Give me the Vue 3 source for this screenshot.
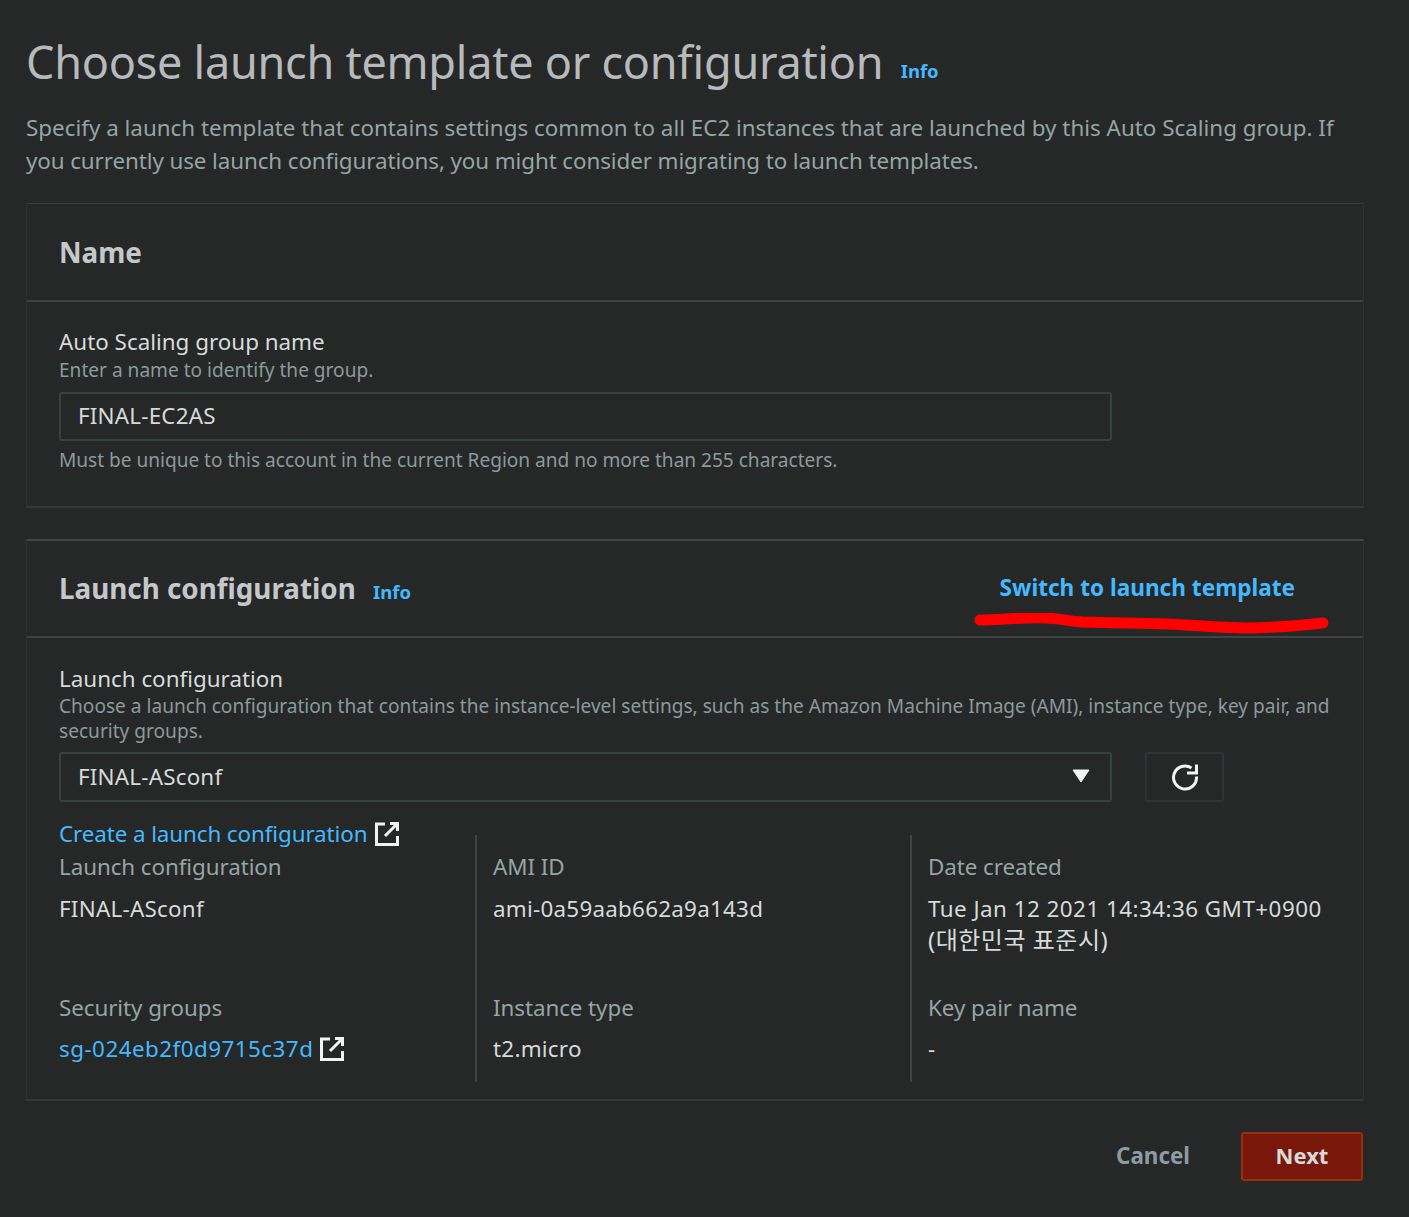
<script setup>
const details = [
  { key: 'Launch configuration', value: 'FINAL-ASconf' },
  { key: 'AMI ID', value: 'ami-0a59aab662a9a143d' },
  { key: 'Date created', value: 'Tue Jan 12 2021 14:34:36 GMT+0900', extra: '(대한민국 표준시)', wide: true },
  { key: 'Security groups', value: 'sg-024eb2f0d9715c37d', link: true, wide: true },
  { key: 'Instance type', value: 't2.micro' },
  { key: 'Key pair name', value: '-' },
]
</script>

<template>
  <main class="page">
    <header class="head">
      <h1>Choose launch template or configuration <a class="info big">Info</a></h1>
      <p>Specify a launch template that contains settings common to all EC2 instances that are launched by this Auto Scaling group. If <span class="tight">you currently use launch configurations, you might consider migrating to launch templates.</span></p>
    </header>

    <section class="card first">
      <div class="card-head"><h2>Name</h2></div>
      <div class="card-body body-one">
        <div class="label">Auto Scaling group name</div>
        <div class="desc">Enter a name to identify the group.</div>
        <div class="input">FINAL-EC2AS</div>
        <div class="desc constraint">Must be unique to this account in the current Region and no more than 255 characters.</div>
      </div>
    </section>

    <section class="card second">
      <div class="card-head split">
        <h2>Launch configuration <a class="info">Info</a></h2>
        <a class="switch">Switch to launch template</a>
        <svg class="scribble" viewBox="0 0 360 24" width="360" height="24" aria-hidden="true">
          <path d="M6 7 C25 7 50 4 73 5 C88 6 95 8 109 9 C140 10 165 10 193 11 C220 12 245 15 273 15 C300 15 330 12 349 10" fill="none" stroke="#fe0000" stroke-width="11" stroke-linecap="round"/>
        </svg>
      </div>
      <div class="card-body">
        <div class="label">Launch configuration</div>
        <div class="desc wrap">Choose a launch configuration that contains the instance-level settings, such as the Amazon Machine Image (AMI), instance type, key pair, and security groups.</div>
        <div class="select-row">
          <div class="input select">
            <span>FINAL-ASconf</span>
            <svg width="18" height="14" viewBox="0 0 18 14" aria-hidden="true"><path d="M1 1h16L9 13z" fill="#f2f3f3" stroke="#f2f3f3" stroke-linejoin="round"/></svg>
          </div>
          <button class="refresh" aria-label="Refresh">
            <svg width="28" height="28" viewBox="0 0 28 28" aria-hidden="true">
              <path d="M25.500 13.500A11.500 11.500 0 1 1 20.500 5" fill="none" stroke="#f2f3f3" stroke-width="3"/>
              <path d="M25.500 1.500v8.500h-9.500" fill="none" stroke="#f2f3f3" stroke-width="3"/>
            </svg>
          </button>
        </div>
        <a class="create">Create a launch configuration
          <svg class="ext" width="24" height="24" viewBox="0 0 24 24" aria-hidden="true">
            <path d="M10 2H1.500v20.500h21V14M15 1.500h7.500V9M22 2 10 14" fill="none" stroke="#f2f3f3" stroke-width="3"/>
          </svg>
        </a>
        <div class="grid">
          <div v-for="d in details" :key="d.key" class="cell">
            <div class="key">{{ d.key }}</div>
            <div class="value" :class="{ linked: d.link, wide: d.wide }">
              {{ d.value }}
              <span v-if="d.extra" class="extra">{{ d.extra }}</span>
              <svg v-if="d.link" class="ext" width="24" height="24" viewBox="0 0 24 24" aria-hidden="true">
                <path d="M10 2H1.500v20.500h21V14M15 1.500h7.500V9M22 2 10 14" fill="none" stroke="#f2f3f3" stroke-width="3"/>
              </svg>
            </div>
          </div>
        </div>
      </div>
    </section>

    <footer class="foot">
      <button class="cancel">Cancel</button>
      <button class="next">Next</button>
    </footer>
  </main>
</template>

<style>
html, body { margin: 0; background: #262727; }
</style>

<style scoped>
.page {
  width: 1338px; height: 1217px; box-sizing: border-box; margin-left: 26px;
  padding-top: 28px; overflow: hidden;
  font-family: "Noto Sans", "Noto Sans CJK KR", sans-serif; font-size: 22.4px; line-height: 33px; color: #d5dbdb;
}
h1 { margin: 0; height: 68px; font-size: 45px; letter-spacing: -0.25px; line-height: 68px; font-weight: 400; color: #b6babd; white-space: nowrap; }
.head p { margin: 0; padding-top: 15px; box-sizing: border-box; height: 107px; color: #95a5a6; }
.tight { letter-spacing: -0.1px; }
.info { color: #44b9ff; font-size: 18.5px; line-height: 1; letter-spacing: 0; font-weight: 700; margin-left: 10px; }
.big { margin-left: 6px; position: relative; top: -1px; }
.card { border-style: solid; border-width: 1px 1px 2px 1px; border-color: #3a3c3c #2b3236 #2f3b3d #2b3236; box-sizing: border-box; }
.first { height: 305px; }
.second { height: 562px; margin-top: 31px; border-top: 2px solid #424545; }
.card-head { height: 98px; box-sizing: border-box; border-bottom: 2px solid #404343; padding: 0 32px; display: flex; align-items: center; position: relative; }
.split { height: 97px; justify-content: space-between; padding-right: 68px; }
h2 { margin: 0; font-size: 27.8px; line-height: 40px; font-weight: 700; color: #c4c8ca; }
.split h2 { margin-bottom: 2px; }
.switch { color: #44b9ff; font-size: 22.6px; font-weight: 700; margin-bottom: 2px; }
.scribble { position: absolute; left: 947px; top: 72px; }
.card-body { padding: 25px 32px 0; }
.body-one { padding-top: 24px; }
.body-one .label { margin-bottom: 1px; }
.label { color: #d5dbdb; line-height: 31px; }
.desc { color: #8b9a9c; font-size: 19.1px; line-height: 25px; }
.input { margin-top: 9px; width: 1053px; height: 49px; box-sizing: border-box; border: 2px solid #364142; border-radius: 3px; padding: 0 17px 2px; display: flex; align-items: center; color: #d5dbdb; letter-spacing: 0.2px; }
.constraint { margin-top: 7px; letter-spacing: -0.02px; }
.select-row { display: flex; gap: 33px; align-items: flex-start; }
.select { justify-content: space-between; height: 50px; margin-top: 8px; padding-right: 20px; }
.refresh { margin-top: 8px; width: 79px; height: 50px; background: none; border: 2px solid #2e3539; border-radius: 3px; display: flex; align-items: center; justify-content: center; padding: 0; }
.create { display: block; margin-top: 15px; height: 18px; color: #44b9ff; white-space: nowrap; letter-spacing: -0.1px; }
.ext { vertical-align: -4px; margin-left: 2px; }
.linked .ext { margin-left: 0; }
.grid { display: grid; grid-template-columns: repeat(3, 435px); grid-template-rows: 141px 106px; }
.cell { padding: 15px 24px 0 16px; border-left: 2px solid #3d4445; box-sizing: border-box; margin-left: -19px; }
.cell:nth-child(3n + 1) { border-left: 0; margin-left: 0; padding-left: 0; }
.key { color: #95a5a6; line-height: 33px; height: 42.5px; letter-spacing: -0.08px; }
.cell:nth-child(n + 4) .key { height: 41.5px; }
.value { line-height: 31px; color: #d5dbdb; letter-spacing: 0.25px; }
.wide { letter-spacing: 0.47px; }
.extra { font-size: 24px; letter-spacing: 0.5px; }
.linked { color: #44b9ff; }
.foot { display: flex; justify-content: flex-end; align-items: center; gap: 51px; margin-top: 31px; padding-right: 1px; }
.foot button { font: 700 22px "Noto Sans", sans-serif; background: none; border: 0; padding: 0 0 3px; }
.foot .cancel { color: #8c9ba6; font-size: 22.4px; }
.foot .next { width: 122px; height: 49px; background: #78170a; border: 2px solid #97300f; border-radius: 3px; color: #d5dbdb; }
</style>
